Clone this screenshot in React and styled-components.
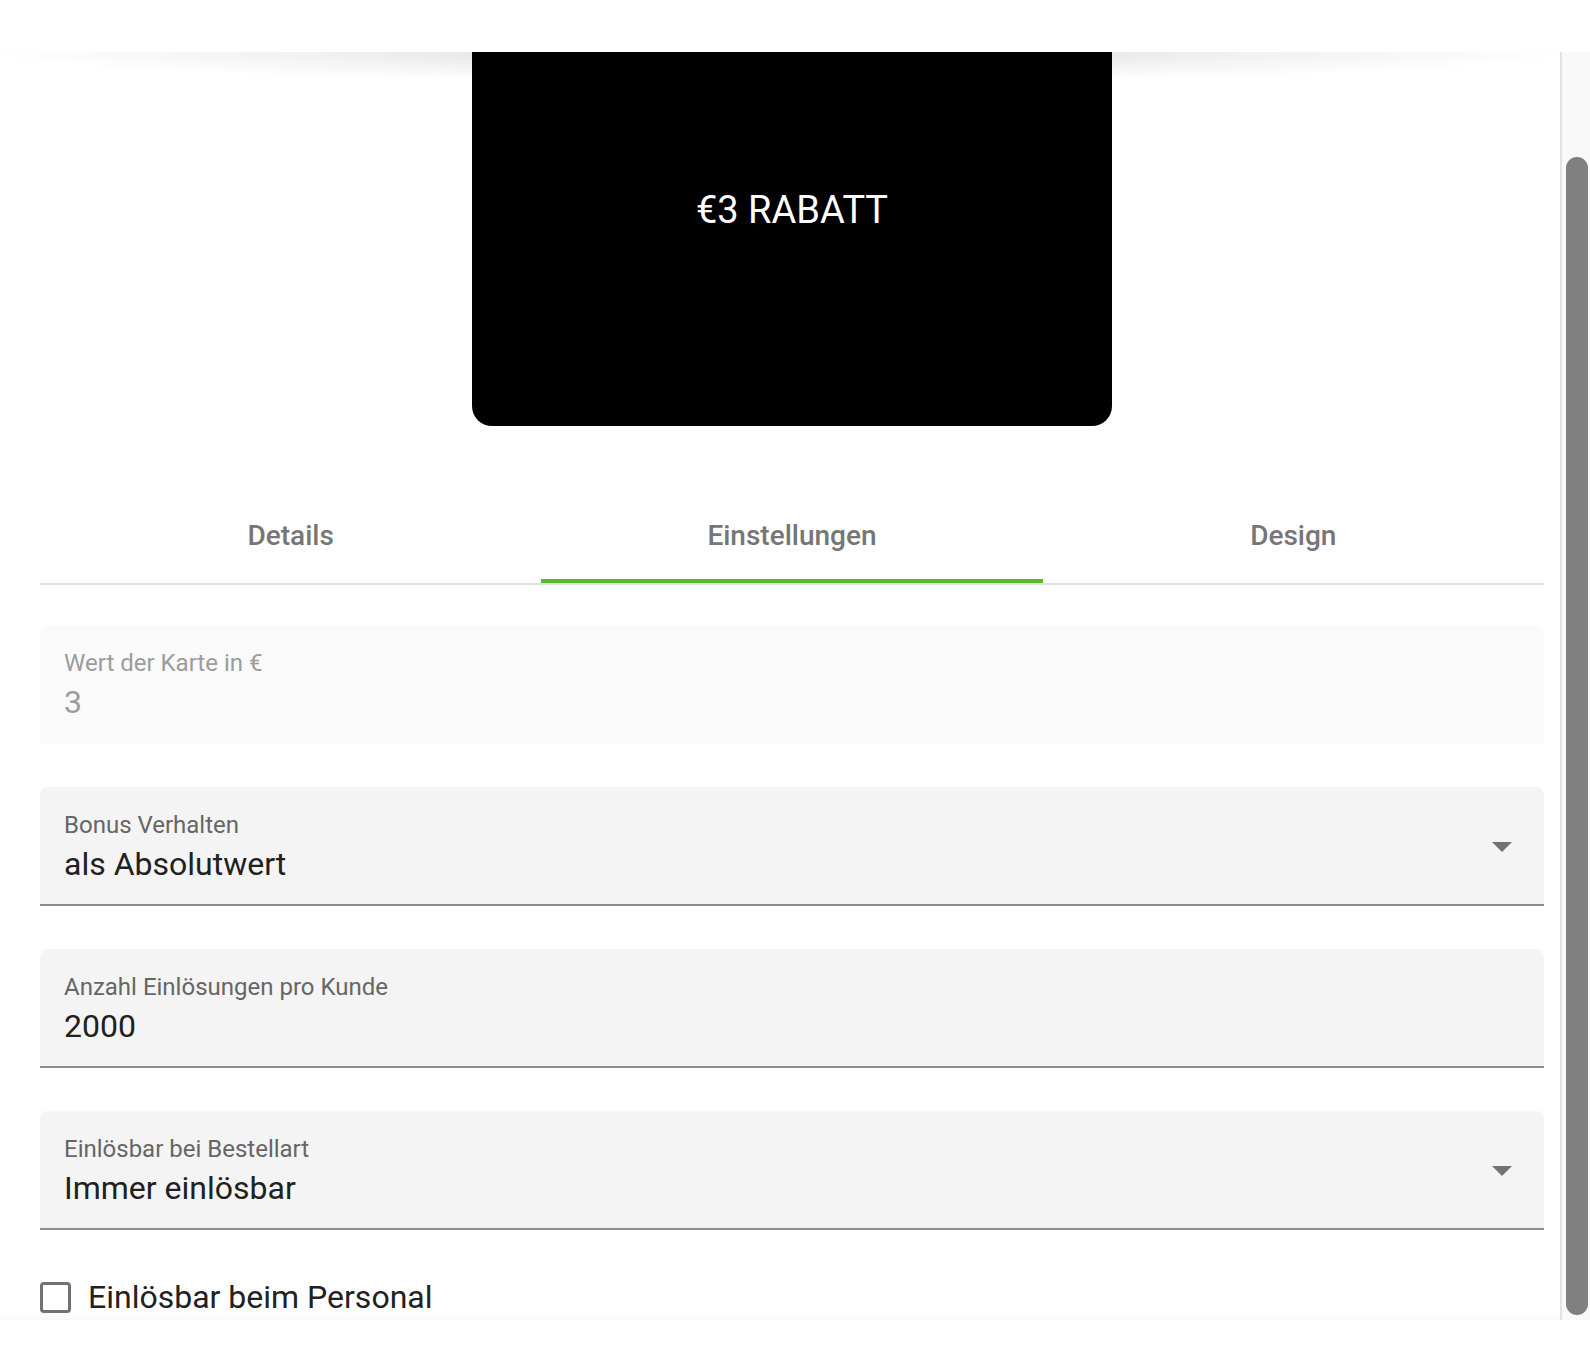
import React, { useState } from "react";
import styled, { createGlobalStyle } from "styled-components";

const GlobalStyle = createGlobalStyle`
  html, body { margin: 0; padding: 0; background: #ffffff; }
  body { font-family: Roboto, "Liberation Sans", Arial, sans-serif; }
  * { box-sizing: border-box; }
`;

const Page = styled.div`
  width: 1590px;
  height: 1350px;
  display: flex;
  flex-direction: column;
  background: #ffffff;
  overflow: hidden;
`;

const Header = styled.header`
  height: 52px;
  flex-shrink: 0;
  background: #ffffff;
`;

const Body = styled.div`
  height: 1268px;
  display: flex;
  flex-shrink: 0;
`;

const Content = styled.main`
  flex: 1;
  position: relative;
  display: flex;
  flex-direction: column;
  padding: 0 16px 0 40px;
  overflow: hidden;

  &::before {
    content: "";
    position: absolute;
    top: 0;
    left: 0;
    right: 0;
    height: 30px;
    background: radial-gradient(
      ellipse 51% 100% at 50% 0%,
      rgba(0, 0, 0, 0.16) 0%,
      rgba(0, 0, 0, 0.06) 55%,
      rgba(0, 0, 0, 0) 100%
    );
    pointer-events: none;
    z-index: 0;
  }

  &::after {
    content: "";
    position: absolute;
    bottom: 0;
    left: 0;
    right: 0;
    height: 8px;
    background: linear-gradient(to bottom, rgba(0, 0, 0, 0), rgba(0, 0, 0, 0.025));
    pointer-events: none;
  }
`;

const ScrollTrack = styled.div`
  width: 30px;
  flex-shrink: 0;
  border-left: 2px solid #e2e2e2;
  background: #f9f9f9;
  padding: 105px 2px 0 4px;
`;

const ScrollThumb = styled.div`
  width: 22px;
  height: 1158px;
  border-radius: 11px;
  background: #808080;
`;

const Footer = styled.footer`
  height: 30px;
  flex-shrink: 0;
  background: #ffffff;
`;

const Card = styled.div`
  position: relative;
  z-index: 1;
  align-self: center;
  width: 640px;
  height: 374px;
  flex-shrink: 0;
  background: #000000;
  border-radius: 0 0 20px 20px;
  padding-top: 136px;
  text-align: center;
  color: #ffffff;
  font-size: 38px;
  line-height: 44px;
  font-weight: 400;
`;

const Tabs = styled.nav`
  margin-top: 61px;
  display: grid;
  grid-template-columns: repeat(3, 1fr);
  border-bottom: 2px solid #dedede;
`;

const Tab = styled.button`
  height: 96px;
  padding: 4px 0 0 0;
  margin: 0;
  border: none;
  border-bottom: 4px solid ${(p) => (p.$active ? "#58bb2a" : "transparent")};
  background: transparent;
  display: flex;
  align-items: center;
  justify-content: center;
  font-family: Roboto, "Liberation Sans", Arial, sans-serif;
  font-size: 28px;
  font-weight: 500;
  color: #767676;
  cursor: pointer;
`;

const FieldStack = styled.div`
  margin-top: 40px;
  display: flex;
  flex-direction: column;
  gap: 43px;
`;

const Field = styled.div`
  height: 119px;
  display: flex;
  align-items: stretch;
  padding: 0 18px 0 24px;
  border-radius: 8px 8px 0 0;
  background: ${(p) => (p.$disabled ? "#fafafa" : "#f4f4f4")};
  border-bottom: 2px solid ${(p) => (p.$disabled ? "transparent" : "#8d8d8d")};
`;

const FieldText = styled.div`
  flex: 1;
  padding-top: 24px;
  display: flex;
  flex-direction: column;
`;

const Label = styled.div`
  font-size: 24px;
  line-height: 28px;
  color: ${(p) => (p.$disabled ? "#9c9c9c" : "#666666")};
`;

const Value = styled.div`
  margin-top: 6px;
  font-size: 32px;
  line-height: 38px;
  color: ${(p) => (p.$disabled ? "#9c9c9c" : "#212121")};
`;

const IconWrap = styled.div`
  align-self: center;
  width: 48px;
  height: 48px;
  display: flex;
  color: #737373;
`;

const CheckRow = styled.label`
  margin-top: 48px;
  display: flex;
  align-items: center;
  gap: 17px;
  cursor: pointer;
`;

const Box = styled.span`
  width: 31px;
  height: 31px;
  border: 3px solid #727272;
  border-radius: 4px;
  background: #ffffff;
  flex-shrink: 0;
`;

const CheckLabel = styled.span`
  font-size: 32px;
  line-height: 38px;
  color: #212121;
`;

const ArrowDropDown = () => (
  <svg width="48" height="48" viewBox="0 0 24 24" fill="currentColor">
    <path d="M7 10l5 5 5-5z" />
  </svg>
);

const fields = [
  { label: "Wert der Karte in €", value: "3", disabled: true },
  { label: "Bonus Verhalten", value: "als Absolutwert", select: true },
  { label: "Anzahl Einlösungen pro Kunde", value: "2000" },
  { label: "Einlösbar bei Bestellart", value: "Immer einlösbar", select: true },
];

export default function App() {
  const [tab, setTab] = useState(1);
  const tabs = ["Details", "Einstellungen", "Design"];
  return (
    <>
      <GlobalStyle />
      <Page>
        <Header />
        <Body>
          <Content>
            <Card>€3 RABATT</Card>
            <Tabs>
              {tabs.map((t, i) => (
                <Tab key={t} $active={i === tab} onClick={() => setTab(i)}>
                  {t}
                </Tab>
              ))}
            </Tabs>
            <FieldStack>
              {fields.map((f) => (
                <Field key={f.label} $disabled={f.disabled}>
                  <FieldText>
                    <Label $disabled={f.disabled}>{f.label}</Label>
                    <Value $disabled={f.disabled}>{f.value}</Value>
                  </FieldText>
                  {f.select && (
                    <IconWrap>
                      <ArrowDropDown />
                    </IconWrap>
                  )}
                </Field>
              ))}
            </FieldStack>
            <CheckRow>
              <Box />
              <CheckLabel>Einlösbar beim Personal</CheckLabel>
            </CheckRow>
          </Content>
          <ScrollTrack>
            <ScrollThumb />
          </ScrollTrack>
        </Body>
        <Footer />
      </Page>
    </>
  );
}
